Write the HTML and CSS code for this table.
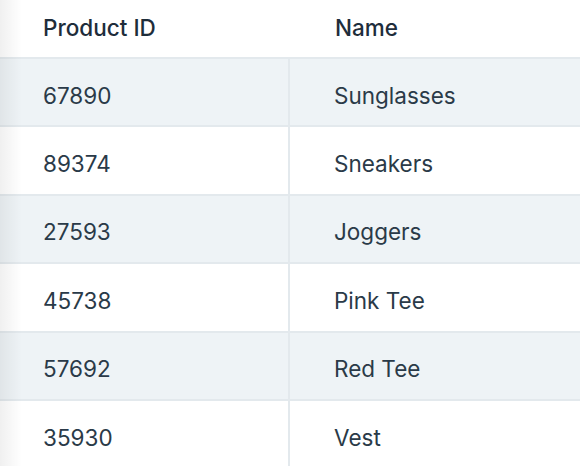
FILE: index.html
```html
<!DOCTYPE html>
<html>
<head>
<meta charset="utf-8">
<link rel="stylesheet" href="styles.css">
</head>
<body>
<div class="wrap">
  <table class="grid">
    <thead>
      <tr><th class="c1">Product ID</th><th class="c2">Name</th></tr>
    </thead>
    <tbody>
      <tr class="odd"><td class="c1">67890</td><td class="c2">Sunglasses</td></tr>
      <tr><td class="c1">89374</td><td class="c2">Sneakers</td></tr>
      <tr class="odd"><td class="c1">27593</td><td class="c2">Joggers</td></tr>
      <tr><td class="c1">45738</td><td class="c2">Pink Tee</td></tr>
      <tr class="odd"><td class="c1">57692</td><td class="c2">Red Tee</td></tr>
      <tr><td class="c1">35930</td><td class="c2">Vest</td></tr>
    </tbody>
  </table>
  <div class="shade"></div>
</div>
</body>
</html>
```
FILE: styles.css
```css
html, body {
  margin: 0;
  padding: 0;
  background: #ffffff;
}
.wrap {
  position: relative;
  width: 580px;
  height: 466px;
  overflow: hidden;
}
.grid {
  width: 100%;
  border-collapse: collapse;
  font-family: Inter, "Noto Sans", sans-serif;
  font-size: 22.5px;
  color: #2a3a48;
  table-layout: fixed;
}
.grid th {
  height: 58px;
  padding: 0 0 2px 43px;
  text-align: left;
  font-weight: 500;
  color: #1e2d3b;
  box-sizing: border-box;
}
.grid th.c1 { width: 289px; }
.grid th.c2 { padding-left: 46px; }
.grid td {
  height: 60.4px;
  padding: 6px 0 0 43px;
  border-top: 2px solid #e3e9ed;
  box-sizing: content-box;
  font-weight: 400;
}
.grid td.c1 {
  border-right: 2px solid #e3e9ed;
}
.grid td.c2 {
  padding-left: 44px;
}
.grid tr.odd td {
  background: #eef3f6;
}
.shade {
  position: absolute;
  left: 0;
  top: 0;
  bottom: 0;
  width: 22px;
  background: linear-gradient(to right, rgba(0,0,0,0.06), rgba(0,0,0,0));
  pointer-events: none;
}
```
